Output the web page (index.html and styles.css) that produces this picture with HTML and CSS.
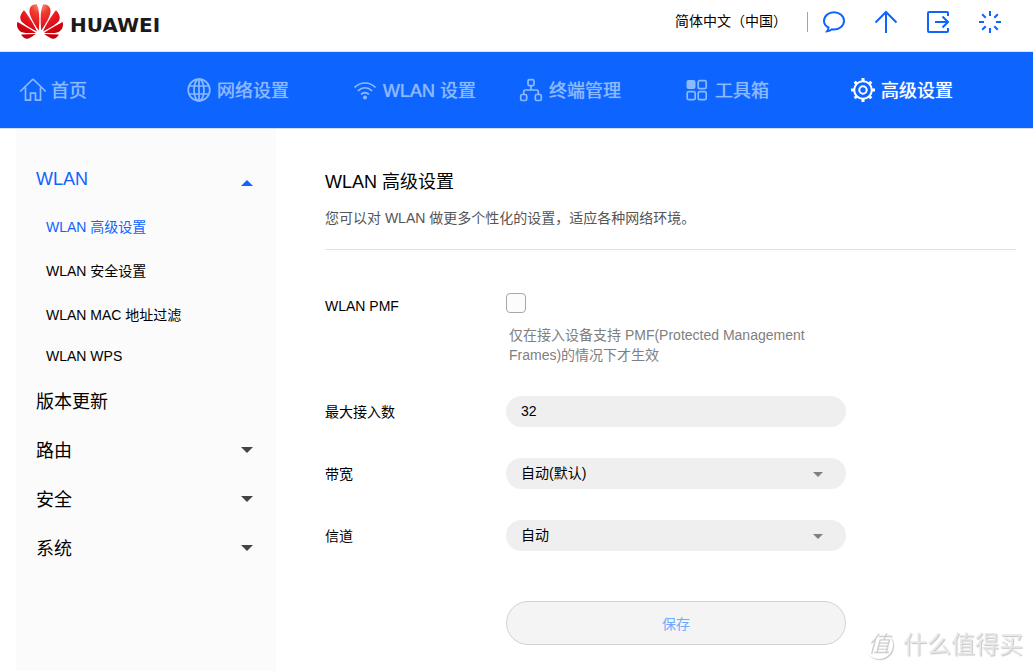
FILE: index.html
```html
<!DOCTYPE html>
<html lang="zh-CN">
<head>
<meta charset="utf-8">
<meta name="viewport" content="width=device-width, initial-scale=1">
<title>WLAN 高级设置</title>
<link rel="stylesheet" href="styles.css">
</head>
<body>
<header class="topbar">
  <a class="brand" href="#">
    <svg class="brand-mark" viewBox="0 2.9 24 18.2" aria-hidden="true">
      <defs>
        <radialGradient id="petal" gradientUnits="userSpaceOnUse" cx="12" cy="3" r="17">
          <stop offset="0" stop-color="#f7a08c"/>
          <stop offset=".3" stop-color="#f0392f"/>
          <stop offset=".7" stop-color="#e2101a"/>
          <stop offset="1" stop-color="#c4000c"/>
        </radialGradient>
      </defs>
      <path fill="url(#petal)" d="M3.67 6.14S1.82 7.91 1.72 9.78v.35c.08 1.51 1.22 2.4 1.22 2.4 1.83 1.79 6.26 4.04 7.3 4.55 0 0 .06.03.1-.01l.02-.04v-.04C7.52 10.8 3.67 6.14 3.67 6.14zM9.65 18.6c-.02-.08-.1-.08-.1-.08l-7.38.26c.8 1.43 2.15 2.53 3.56 2.2.96-.25 3.16-1.78 3.88-2.3.06-.05.04-.09.04-.09zm.08-.78C6.49 15.63.21 12.28.21 12.28c-.15.46-.2.9-.21 1.3v.07c0 1.07.4 1.82.4 1.82.8 1.69 2.34 2.2 2.34 2.2.7.3 1.4.31 1.4.31.12.02 4.4 0 5.54 0 .05 0 .08-.05.08-.05v-.06c0-.03-.03-.05-.03-.05zM9.06 3.19a3.42 3.42 0 0 0-2.57 3.15v.41c.03.6.16 1.05.16 1.05.66 2.9 3.86 7.65 4.55 8.65.05.05.1.03.1.03a.1.1 0 0 0 .06-.1c1.06-10.6-1.11-13.42-1.11-13.42-.32.02-1.19.23-1.19.23zm8.3 2.27s-.49-1.8-2.44-2.28c0 0-.57-.14-1.17-.22 0 0-2.18 2.81-1.12 13.43.01.07.06.08.06.08.07.03.1-.03.1-.03.72-1.03 3.9-5.76 4.55-8.64 0 0 .36-1.4.02-2.34zm-2.92 13.07s-.07 0-.09.05c0 0-.01.07.03.1.7.51 2.85 2 3.88 2.3 0 0 .16.05.43.06h.14c.69-.02 1.9-.37 3-2.26l-7.4-.25zm7.83-8.41c.14-2.06-1.94-3.97-1.94-3.98 0 0-3.85 4.66-6.67 10.8 0 0-.03.08.02.13l.04.01h.06c1.06-.53 5.46-2.77 7.28-4.54 0 0 1.15-.93 1.21-2.42zm1.52 2.14s-6.28 3.37-9.52 5.55c0 0-.05.04-.03.11 0 0 .03.06.07.06 1.16 0 5.56 0 5.67-.02 0 0 .57-.02 1.27-.29 0 0 1.56-.5 2.37-2.27 0 0 .73-1.45.17-3.14z"/>
    </svg>
    <span class="brand-name">HUAWEI</span>
  </a>
  <div class="tools">
    <button class="language" type="button">简体中文（中国）</button>
    <span class="divider"></span>
    <button class="tool" type="button" aria-label="反馈">
      <svg viewBox="0 0 22 22"><path d="M5.500 16.500C2.800 15.200 1 13 1 10 1 5 5.500 1.200 11 1.200S21 5 21 9.800s-4.500 8.700-10 8.700c-.8 0-1.500-.1-2-.2-1.300 1-3 1.700-4.800 1.900.8-1 1.200-2.300 1.300-3.700z"/></svg>
    </button>
    <button class="tool" type="button" aria-label="升级">
      <svg viewBox="0 0 22 22"><path d="M11 22V1M.5 11.500 11 1l10.500 10.500"/></svg>
    </button>
    <button class="tool" type="button" aria-label="退出">
      <svg viewBox="0 0 22 22"><path d="M21 5V2q0-1-1-1H2Q1 1 1 2v18q0 1 1 1h18q1 0 1-1v-3M8 11h13M15.500 5.500 21 11l-5.500 5.500"/></svg>
    </button>
    <button class="tool" type="button" aria-label="状态">
      <svg viewBox="0 0 22 22"><path d="M11 0v5M11 17v5M0 11h5M17 11h5M3.200 3.200l3.500 3.500M15.300 15.300l3.500 3.500M3.200 18.800l3.500-3.500M15.300 6.700l3.500-3.500"/></svg>
    </button>
  </div>
</header>

<nav class="mainnav">
  <a class="nav-item" href="#">
    <svg viewBox="0 0 24 24"><path d="M-.8 13.500 11 2q1-1 2 0l11.800 11.500M4.500 9.500V22.200h5v-7h5v7h5V9.500"/></svg>
    <span>首页</span>
  </a>
  <a class="nav-item" href="#">
    <svg viewBox="0 0 24 24"><circle cx="12" cy="12" r="10.800"/><ellipse cx="12" cy="12" rx="5" ry="10.800"/><path d="M12 1.200v21.600M2.500 8h19M2.500 16h19"/></svg>
    <span>网络设置</span>
  </a>
  <a class="nav-item" href="#">
    <svg viewBox="0 0 24 24"><path d="M1.500 9.500c6-6 15-6 21 0M4.800 13c4.500-4.200 10-4.200 14.400 0M8 16.300c2.500-2.200 5.500-2.200 8 0"/><circle class="solid" cx="12" cy="19.500" r="2"/></svg>
    <span>WLAN 设置</span>
  </a>
  <a class="nav-item" href="#">
    <svg viewBox="0 0 24 24"><rect x="9" y="1.700" width="6" height="6" rx="1.500"/><rect x="1.700" y="16.500" width="6" height="6" rx="1.500"/><rect x="16.300" y="16.500" width="6" height="6" rx="1.500"/><path d="M12 7.700V12M4.700 16.500v-2.800q0-1.700 1.700-1.700h11.200q1.700 0 1.700 1.700v2.800"/></svg>
    <span>终端管理</span>
  </a>
  <a class="nav-item" href="#">
    <svg viewBox="0 0 24 24"><rect class="solid" x="1.500" y="2" width="9" height="9" rx="2"/><rect x="13.200" y="2.700" width="8" height="8" rx="1.500"/><rect x="2.200" y="13.700" width="8" height="8" rx="1.500"/><rect x="13.200" y="13.700" width="8" height="8" rx="1.500"/></svg>
    <span>工具箱</span>
  </a>
  <a class="nav-item is-active" href="#" aria-current="page">
    <svg viewBox="0 0 24 24"><circle cx="12" cy="12" r="8.800"/><circle cx="12" cy="12" r="3.700"/><path class="teeth" d="M12 0v3M12 21v3M0 12h3M21 12h3M3.700 3.700l2 2M18.300 18.300l2 2M3.700 20.300l2-2M18.300 5.700l2-2"/></svg>
    <span>高级设置</span>
  </a>
</nav>

<div class="layout">
  <aside class="sidebar">
    <a class="section is-open" href="#">WLAN<svg class="caret" viewBox="0 0 12 6"><path d="M0 6 6 0l6 6z"/></svg></a>
    <ul class="submenu">
      <li><a class="is-current" href="#">WLAN 高级设置</a></li>
      <li><a href="#">WLAN 安全设置</a></li>
      <li><a href="#">WLAN MAC 地址过滤</a></li>
      <li><a href="#">WLAN WPS</a></li>
    </ul>
    <a class="section" href="#">版本更新</a>
    <a class="section" href="#">路由<svg class="caret" viewBox="0 0 12 6"><path d="M0 0h12L6 6z"/></svg></a>
    <a class="section" href="#">安全<svg class="caret" viewBox="0 0 12 6"><path d="M0 0h12L6 6z"/></svg></a>
    <a class="section" href="#">系统<svg class="caret" viewBox="0 0 12 6"><path d="M0 0h12L6 6z"/></svg></a>
  </aside>

  <main class="content">
    <h1 class="title">WLAN 高级设置</h1>
    <p class="intro">您可以对 WLAN 做更多个性化的设置，适应各种网络环境。</p>
    <form class="form">
      <label class="label label-check" for="pmf">WLAN PMF</label>
      <div class="control">
        <input class="check" id="pmf" type="checkbox">
        <p class="hint">仅在接入设备支持 PMF(Protected Management Frames)的情况下才生效</p>
      </div>
      <label class="label" for="max">最大接入数</label>
      <input class="field" id="max" type="text" value="32">
      <label class="label" for="bandwidth">带宽</label>
      <div class="picker">
        <select class="field" id="bandwidth"><option>自动(默认)</option></select>
        <svg class="picker-caret" viewBox="0 0 10 5"><path d="M0 0h10L5 5z"/></svg>
      </div>
      <label class="label" for="channel">信道</label>
      <div class="picker">
        <select class="field" id="channel"><option>自动</option></select>
        <svg class="picker-caret" viewBox="0 0 10 5"><path d="M0 0h10L5 5z"/></svg>
      </div>
      <button class="save" type="button">保存</button>
    </form>
  </main>
</div>

<div class="watermark"><span class="watermark-seal">值</span><span>什么值得买</span></div>
</body>
</html>
```

FILE: styles.css
```css
* {
  box-sizing: border-box;
}

body {
  margin: 0;
  min-height: 100vh;
  display: flex;
  flex-direction: column;
  background: #fff;
  color: #000;
  font-family: "Liberation Sans", "Noto Sans CJK SC", sans-serif;
  font-size: 14px;
}

a {
  color: inherit;
  text-decoration: none;
}

button,
input,
select {
  margin: 0;
  font: inherit;
  color: inherit;
}

/* Top bar */
.topbar {
  display: flex;
  align-items: center;
  justify-content: space-between;
  height: 52px;
  padding: 0 32px 8px 17px;
  border-bottom: 1px solid #dde3ee;
}

.brand {
  display: flex;
  align-items: center;
  gap: 7px;
}

.brand-mark {
  width: 46px;
  height: 35px;
}

.brand-name {
  padding-top: 6px;
  color: #1c1a1b;
  font-family: "DejaVu Sans", sans-serif;
  font-size: 20px;
  font-weight: bold;
  line-height: 24px;
}

.tools {
  display: flex;
  align-items: center;
}

.language {
  padding: 0 0 2px;
  border: 0;
  background: none;
  line-height: 20px;
}

.divider {
  width: 1px;
  height: 20px;
  margin: 0 15px 0 20px;
  background: #a5a5a5;
}

.tool {
  display: flex;
  padding: 0;
  border: 0;
  background: none;
}

.tool + .tool {
  margin-left: 30px;
}

.tool svg {
  width: 22px;
  height: 22px;
  overflow: visible;
  fill: none;
  stroke: #0d64ff;
  stroke-width: 2;
}

/* Main navigation */
.mainnav {
  display: grid;
  grid-template-columns: repeat(6, 1fr);
  height: 77px;
  padding: 0 16px 0 21px;
  border-bottom: 1px solid #d5dcea;
  background: #0d64ff;
}

.nav-item {
  display: flex;
  align-items: center;
  gap: 6px;
  color: #8cbaff;
  font-size: 18px;
  text-shadow: 0 0 1px currentColor;
  white-space: nowrap;
}

.nav-item span {
  padding-bottom: 3px;
}

.nav-item svg {
  flex: none;
  width: 24px;
  height: 24px;
  overflow: visible;
  fill: none;
  stroke: currentColor;
  stroke-width: 1.7;
}

.nav-item .solid {
  fill: currentColor;
  stroke: none;
}

.nav-item.is-active {
  color: #fff;
}

.nav-item.is-active svg {
  stroke-width: 2;
}

.nav-item .teeth {
  stroke-width: 3;
}

/* Page columns */
.layout {
  display: flex;
  flex: 1;
  padding: 0 17px 0 16px;
}

.sidebar {
  flex: none;
  width: 260px;
  padding: 26px 23px 0 20px;
  background: #fbfbfb;
}

.section {
  display: flex;
  align-items: center;
  justify-content: space-between;
  height: 49px;
  padding-bottom: 2px;
  font-size: 18px;
}

.section.is-open {
  padding-bottom: 0;
}

.section.is-open,
.submenu .is-current {
  color: #0d64ff;
}

.caret {
  width: 12px;
  height: 6px;
  margin-top: 2px;
  fill: #444;
}

.is-open .caret {
  margin-top: 6px;
  fill: #0d64ff;
}

.submenu {
  margin: 0;
  padding: 0 0 0 10px;
  list-style: none;
}

.submenu a {
  display: block;
  padding: 12px 0;
}

/* Content */
.content {
  flex: 1;
  padding: 40px 0 26px 49px;
}

.title {
  margin: 0;
  font-size: 18px;
  font-weight: normal;
  line-height: 26px;
}

.intro {
  margin: 0;
  padding: 13px 0 21px;
  border-bottom: 1px solid #e2e2e2;
  color: #555;
  line-height: 20px;
}

.form {
  display: grid;
  grid-template-columns: 181px minmax(0, 340px);
  row-gap: 31px;
  padding-top: 43px;
}

.label {
  padding-top: 2px;
  line-height: 29px;
}

.label-check {
  padding-top: 3px;
  line-height: 20px;
}

.check {
  display: block;
  width: 20px;
  height: 20px;
  border: 1px solid #a8a8a8;
  border-radius: 4px;
  background: #fcfcfc;
  appearance: none;
}

.hint {
  margin: 12px 0 0;
  padding: 0 30px 0 3px;
  color: #808080;
  line-height: 20px;
}

.field {
  display: block;
  width: 100%;
  height: 31px;
  padding: 0 15px 2px;
  border: 0;
  border-radius: 16px;
  background: #efefef;
  appearance: none;
}

.picker {
  position: relative;
  height: 31px;
}

.picker-caret {
  position: absolute;
  top: 14px;
  right: 23px;
  width: 10px;
  height: 5px;
  fill: #808080;
  pointer-events: none;
}

.save {
  grid-column: 2;
  height: 44px;
  margin-top: 19px;
  border: 1px solid #d2d2d2;
  border-radius: 22px;
  background: #f4f4f4;
  color: #6ea8ff;
}

/* Watermark */
.watermark {
  position: fixed;
  right: 10px;
  bottom: 8px;
  display: flex;
  align-items: center;
  gap: 10px;
  color: #e8e8e8;
  font-size: 24px;
  line-height: 36px;
  text-shadow: 1px 1px 1px #c4c4c4;
  pointer-events: none;
}

.watermark-seal {
  width: 28px;
  height: 28px;
  border-radius: 50%;
  box-shadow: 1px 1px 1px #c4c4c4;
  color: #cfcfcf;
  font-size: 22px;
  font-style: italic;
  line-height: 27px;
  text-align: center;
  text-shadow: none;
}
```
